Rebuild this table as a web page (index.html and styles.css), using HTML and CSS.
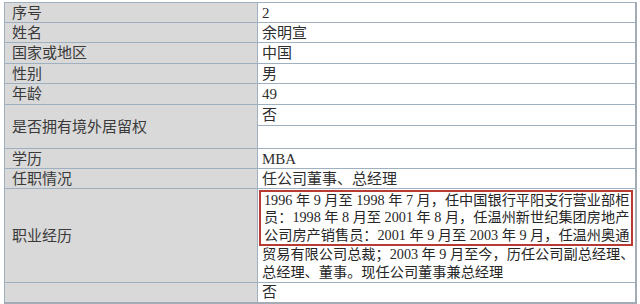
FILE: index.html
```html
<!DOCTYPE html>
<html lang="zh">
<head>
<meta charset="utf-8">
<link rel="stylesheet" href="styles.css">
</head>
<body>
<table class="info">
  <tr class="r20"><td class="k">序号</td><td class="v">2</td></tr>
  <tr class="r20"><td class="k">姓名</td><td class="v">余明宣</td></tr>
  <tr class="r21"><td class="k">国家或地区</td><td class="v">中国</td></tr>
  <tr class="r20"><td class="k">性别</td><td class="v">男</td></tr>
  <tr class="r21"><td class="k">年龄</td><td class="v">49</td></tr>
  <tr class="r21"><td class="k" rowspan="2">是否拥有境外居留权</td><td class="v">否</td></tr>
  <tr class="r23"><td class="v"></td></tr>
  <tr class="r20"><td class="k">学历</td><td class="v">MBA</td></tr>
  <tr class="r20"><td class="k">任职情况</td><td class="v">任公司董事、总经理</td></tr>
  <tr class="r94">
    <td class="k">职业经历</td>
    <td class="v multi">
      <div class="mark">
        <div class="ln">1996 年 9 月至 1998 年 7 月，任中国银行平阳支行营业部柜</div>
        <div class="ln">员：1998 年 8 月至 2001 年 8 月，任温州新世纪集团房地产</div>
        <div class="ln">公司房产销售员：2001 年 9 月至 2003 年 9 月，任温州奥通</div>
      </div>
      <div class="ln">贸易有限公司总裁；2003 年 9 月至今，历任公司副总经理、</div>
      <div class="ln last">总经理、董事。现任公司董事兼总经理</div>
    </td>
  </tr>
  <tr class="r20"><td class="k faded"></td><td class="v">否</td></tr>
</table>
</body>
</html>
```

FILE: styles.css
```css
html, body {
  margin: 0;
  padding: 0;
  background: #ffffff;
}
body {
  padding: 2px 0 0 4px;
  font-family: "Liberation Serif", "Noto Sans CJK SC", serif;
  font-size: 15px;
  color: #2e2e2e;
}
.info {
  border-collapse: collapse;
  width: 633px;
  table-layout: fixed;
}
.info td {
  border: 1px solid #9fb0c0;
  padding: 0;
  line-height: 18px;
  vertical-align: middle;
}
.info .k {
  width: 245px;
  background: #d9d9d9;
  padding-left: 7px;
  color: #3a3a3a;
}
.info .v {
  background: #ffffff;
  padding-left: 4px;
  padding-right: 2px;
}
.info td:last-child {
  border-right: 2px solid #a3acb5;
}
.r20 { height: 20px; }
.r21 { height: 21px; }
.r23 { height: 23px; }
.r94 { height: 94px; }
.multi {
  padding-bottom: 1px;
  font-size: 14.2px;
  color: #262626;
}
.mark {
  border: 2px solid #b73a33;
  margin-left: -3px;
  padding-left: 3px;
  padding-right: 2px;
}
.ln {
  line-height: 17.5px;
  text-align: justify;
  text-align-last: justify;
  white-space: nowrap;
}
.ln.last {
  text-align-last: left;
}
.faded {
  background: #dcdcdc;
}
.info tr:last-child td {
  border-bottom: 2px solid #a3acb5;
}
```
